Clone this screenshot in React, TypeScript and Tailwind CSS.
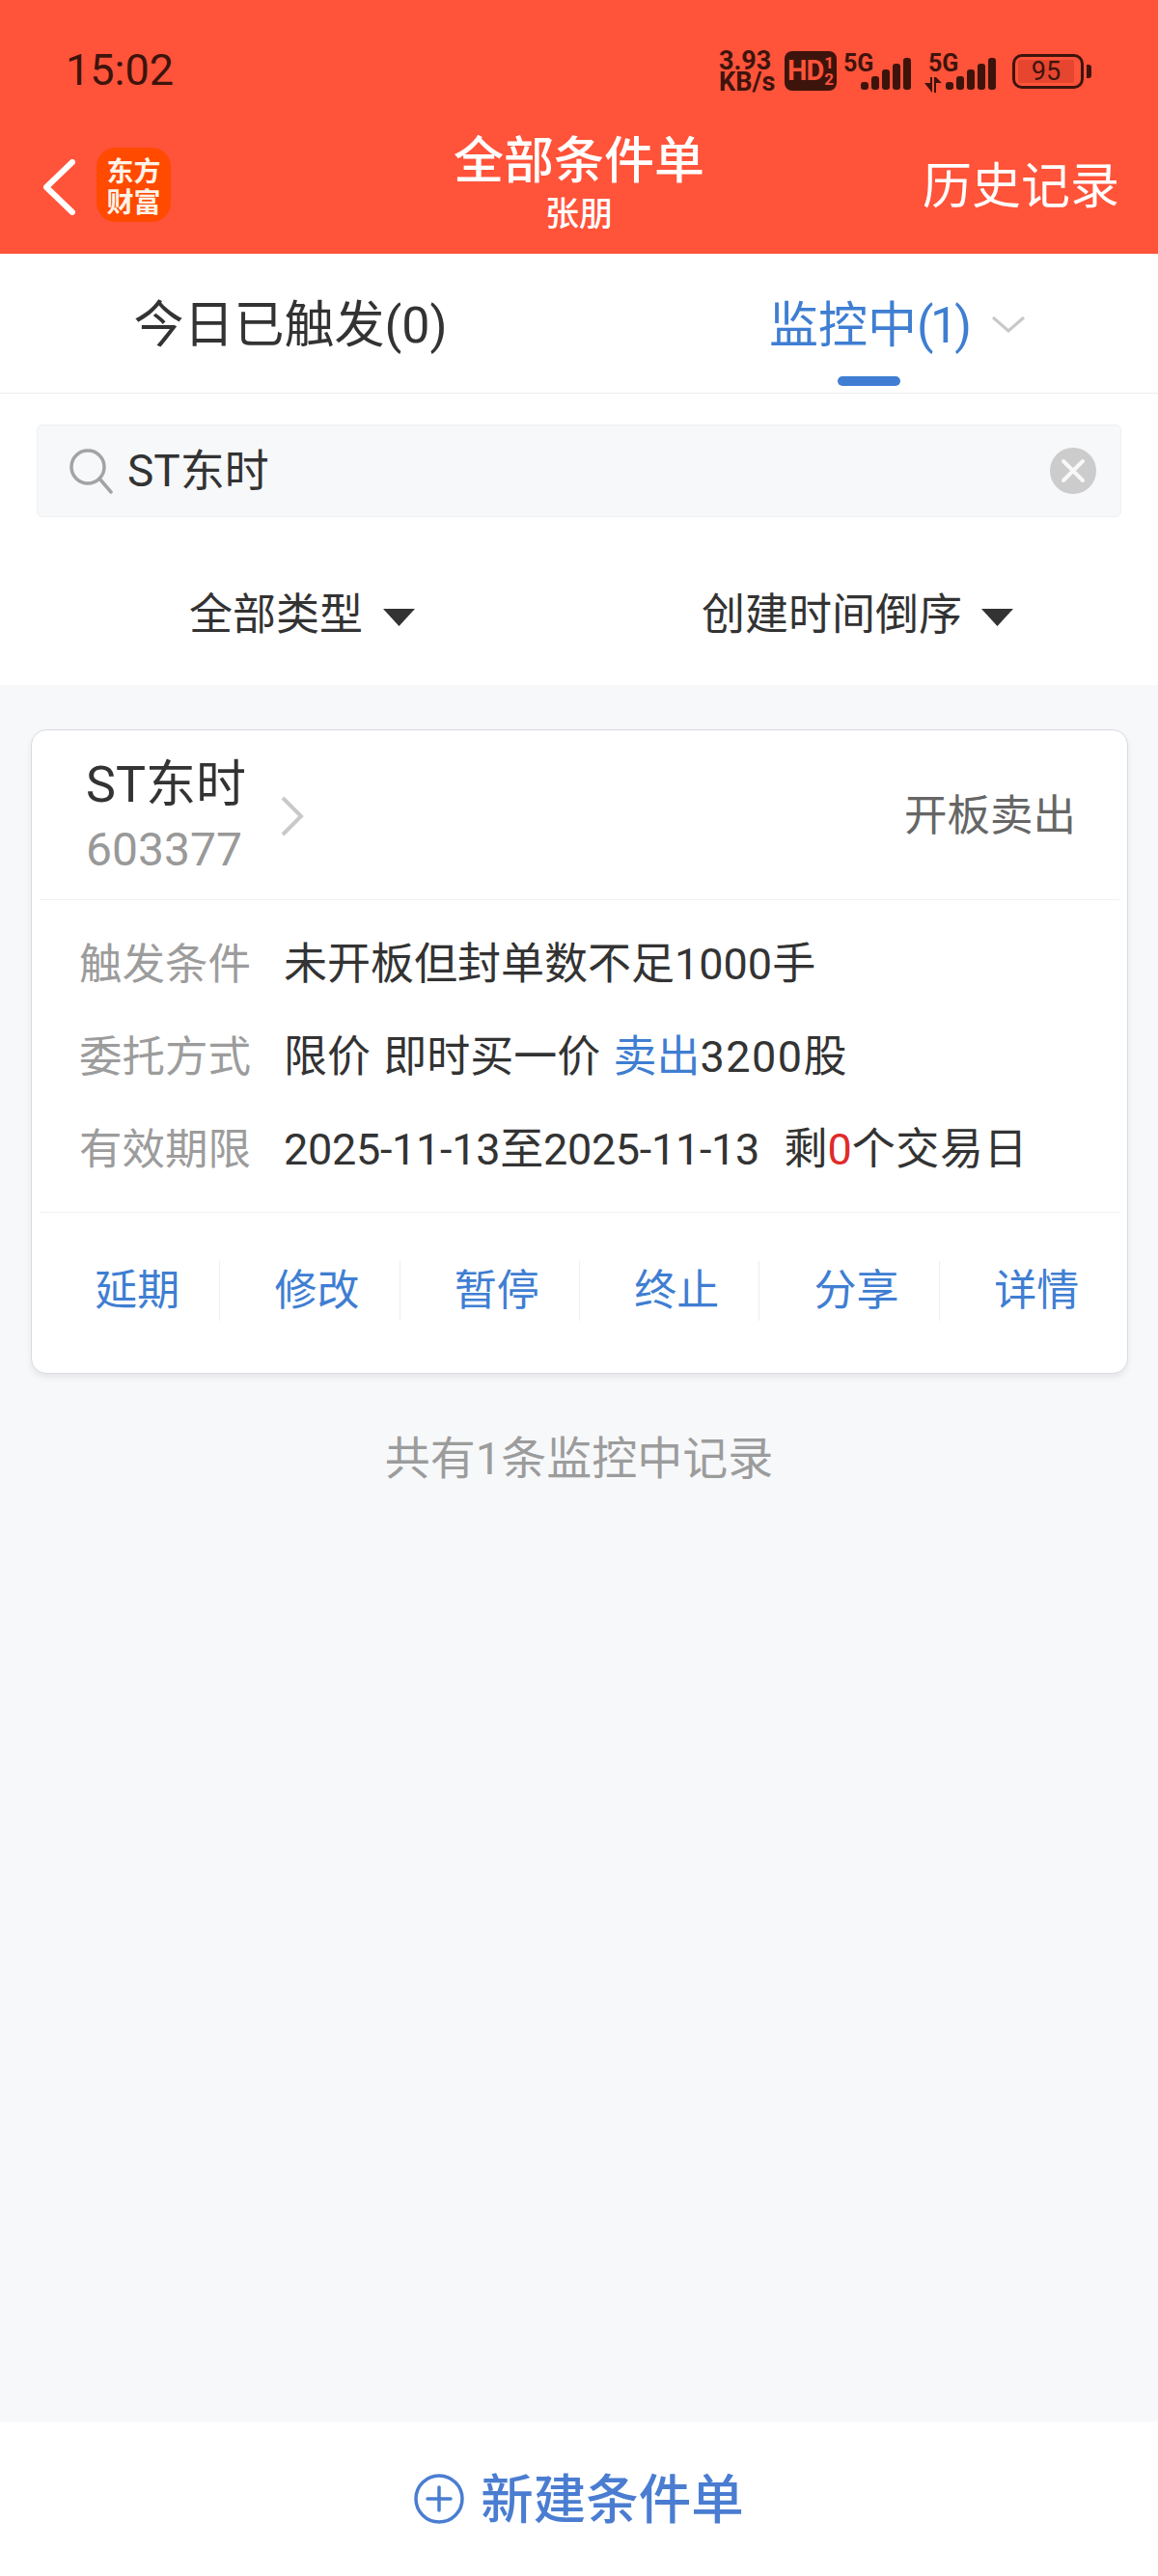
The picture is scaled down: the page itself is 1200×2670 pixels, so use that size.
import React from "react";

const ff = "font-['Roboto','Noto_Sans_CJK_SC',sans-serif]";

function Signal({ arrows }: { arrows?: boolean }) {
  const heights = [8, 14, 21, 27, 33];
  return (
    <div className="relative w-[76px] h-[40px]">
      <span className={`absolute left-[4px] top-[-3px] text-[25px] leading-none font-bold text-[#3d140c] ${ff}`}>5G</span>
      <svg width="76" height="40" viewBox="0 0 76 40" className="absolute left-0 top-0">
        {arrows && (
          <g fill="#3d140c">
            <path d="M0 30 h6 v-6 h2 v16 z" />
            <path d="M10 24 h2 l6 6 h-6 v10 h-2 z" />
          </g>
        )}
        {heights.map((h, i) => (
          <rect key={i} x={22 + i * 11} y={37 - h} width="8" height={h} rx="3" fill="#3d140c" />
        ))}
      </svg>
    </div>
  );
}

function StatusBar() {
  return (
    <div className="h-[130px] flex items-start justify-between pl-[68px] pr-[69px] pt-[50px]">
      <span className={`text-[45px] leading-[45px] font-normal text-[#3d140c] ${ff}`}>15:02</span>
      <div className="flex items-start">
        <div className={`w-[60px] font-bold text-[#3d140c] text-[27px] leading-[22px] mt-[2px] ${ff}`}>
          <div>3.93</div>
          <div>KB/s</div>
        </div>
        <div className={`ml-[8px] w-[54px] h-[41px] mt-[3px] rounded-[8px] bg-[#3d140c] flex items-center justify-center text-[#ff533a] font-bold ${ff}`}>
          <span className="text-[29px] leading-none tracking-[-1px]">HD</span>
          <span className="flex flex-col text-[17px] leading-[17px] ml-[1px]">
            <span>1</span>
            <span>2</span>
          </span>
        </div>
        <div className="ml-[3px] mt-[6px]">
          <Signal />
        </div>
        <div className="ml-[12px] mt-[6px]">
          <Signal arrows />
        </div>
        <div className="ml-[15px] mt-[6px] flex items-center">
          <div className="w-[74px] h-[36px] rounded-[10px] border-[3.5px] border-[#3d140c] flex items-center p-[3px] pr-[7px]">
            <div className={`w-full h-full rounded-[2px] bg-[#e64530] flex items-center justify-center text-[#3d140c] text-[27px] leading-none ${ff}`}>95</div>
          </div>
          <div className="ml-[3px] w-[5px] h-[14px] rounded-r-[3px] bg-[#3d140c]" />
        </div>
      </div>
    </div>
  );
}

function TitleBar() {
  return (
    <div className="h-[133px] grid grid-cols-[1fr_auto_1fr] items-start">
      <div className="flex items-start pl-[44px] pt-[23px]">
        <svg width="34" height="58" viewBox="0 0 34 58" className="mt-[12px]">
          <path d="M31 3 L4 29 L31 55" fill="none" stroke="#ffffff" strokeWidth="6" strokeLinecap="round" strokeLinejoin="round" />
        </svg>
        <div className="ml-[22px] w-[77px] h-[77px] rounded-[20px] bg-[#ff4a00] flex flex-col items-center justify-center text-[#fff3e8] text-[28px] leading-[32px] font-bold font-['Noto_Sans_CJK_SC',sans-serif]">
          <span>东方</span>
          <span>财富</span>
        </div>
      </div>
      <div className={`flex flex-col items-center text-white ${ff}`}>
        <span className="text-[52px] leading-[60px] font-medium mt-[8px]">全部条件单</span>
        <span className="text-[35px] leading-[40px] font-medium mt-[5px]">张朋</span>
      </div>
      <div className={`text-right pr-[40px] pt-[34px] text-white text-[51px] leading-[60px] ${ff}`}>历史记录</div>
    </div>
  );
}

function Tabs() {
  return (
    <div className={`h-[145px] bg-white border-b border-[#eeeeee] flex ${ff}`}>
      <div className="w-[602px] pt-[45px] text-center text-[#333333] text-[52px] leading-[60px]">
        今日已触发(0)
      </div>
      <div className="flex-1 relative pt-[45px] pl-[195px] flex items-start">
        <span className="text-[#3f7ed2] text-[51px] leading-[60px]">
          监控中<span className="tracking-[-3.5px]">(1)</span>
        </span>
        <svg width="36" height="20" viewBox="0 0 36 20" className="ml-[24px] mt-[18px]">
          <path d="M2 3 L18 17 L34 3" fill="none" stroke="#c8c8c8" strokeWidth="3" />
        </svg>
        <div className="absolute left-[266px] top-[127px] w-[65px] h-[10px] rounded-[5px] bg-[#3f7ed2]" />
      </div>
    </div>
  );
}

function Search() {
  return (
    <div className={`bg-white pt-[32px] px-[38px] ${ff}`}>
      <div className="h-[96px] rounded-[6px] bg-[#f7f8fa] border border-[#f0f0f2] flex items-center pl-[32px] pr-[25px]">
        <svg width="46" height="48" viewBox="0 0 46 48" fill="none" stroke="#a3a3a3" strokeWidth="3.5">
          <circle cx="20" cy="20" r="17" />
          <path d="M32 32 L44 46" strokeLinecap="round" />
        </svg>
        <span className="ml-[15px] flex-1 text-[#333333] text-[46px] leading-[56px]">ST东时</span>
        <svg width="48" height="48" viewBox="0 0 48 48">
          <circle cx="24" cy="24" r="24" fill="#cccccc" />
          <path d="M14 14 L34 34 M34 14 L14 34" stroke="#f7f8fa" strokeWidth="4" strokeLinecap="round" />
        </svg>
      </div>
    </div>
  );
}

function Caret() {
  return (
    <svg width="33" height="18" viewBox="0 0 33 18" className="mt-[4px]">
      <path d="M0 0 H33 L16.5 18 Z" fill="#333333" />
    </svg>
  );
}

function Filters() {
  return (
    <div className={`bg-white h-[174px] pt-[30px] flex items-center text-[#333333] text-[45px] leading-[54px] ${ff}`}>
      <div className="w-[196px]" />
      <div className="w-[531px] flex items-center gap-[21px]">
        <span>全部类型</span>
        <Caret />
      </div>
      <div className="flex items-center gap-[20px]">
        <span>创建时间倒序</span>
        <Caret />
      </div>
    </div>
  );
}

function Row({ label, children }: { label: string; children: React.ReactNode }) {
  return (
    <div className="h-[96px] flex items-center">
      <span className="w-[212px] text-[#9c9c9c] text-[44.5px] leading-[54px]">{label}</span>
      <span className="text-[#333333] text-[45px] leading-[54px] whitespace-pre">{children}</span>
    </div>
  );
}

function Card() {
  const actions = ["延期", "修改", "暂停", "终止", "分享", "详情"];
  return (
    <div className={`ml-[32px] mr-[31px] mt-[46px] h-[668px] bg-white rounded-[16px] border border-[#d9dbe0] shadow-[0_4px_6px_rgba(0,0,0,0.07)] px-[8px] ${ff}`}>
      <div className="h-[176px] border-b border-[#f0f0f0] flex items-start">
        <div className="ml-[48px] mt-[27px] flex flex-col">
          <span className="text-[#333333] text-[52px] leading-[60px]">ST东时</span>
          <span className="text-[#999999] text-[48px] leading-[60px] mt-[7px]">603377</span>
        </div>
        <svg width="26" height="44" viewBox="0 0 26 44" className="ml-[35px] mt-[67px]">
          <path d="M3 3 L22 22 L3 41" fill="none" stroke="#c9c9c9" strokeWidth="4" />
        </svg>
        <span className="ml-auto mr-[45px] mt-[62px] text-[#666666] text-[44.5px] leading-[54px]">开板卖出</span>
      </div>
      <div className="h-[324px] border-b border-[#f0f0f0] pl-[41px] pt-[19px]">
        <Row label="触发条件">未开板但封单数不足1000手</Row>
        <Row label="委托方式">
          限价<span className="tracking-[2px]"> </span>即时买一价<span className="tracking-[2px]"> </span>
          <span className="text-[#3f7ed2]">卖出</span>
          <span className="tracking-[1.5px]">3200</span>股
        </Row>
        <Row label="有效期限">
          <span className="tracking-[-0.3px]">2025-11-13至2025-11-13</span>
          <span className="tracking-[1.5px]">  </span>剩<span className="text-[#e02a2a]">0</span>
          <span className="tracking-[0.6px]">个交易日</span>
        </Row>
      </div>
      <div className="flex pl-[1px] pt-[50px]">
        {actions.map((a, i) => (
          <div
            key={a}
            className={`w-[186.6px] h-[62px] pl-[15px] flex items-center justify-center text-[#3f7ed2] text-[44px] leading-[54px] ${i < 5 ? "border-r border-[#eeeeee]" : ""}`}
          >
            {a}
          </div>
        ))}
      </div>
    </div>
  );
}

function Footer() {
  return (
    <div className={`h-[160px] bg-white flex items-center justify-center text-[#4a7dd1] ${ff}`}>
      <svg width="52" height="52" viewBox="0 0 52 52" fill="none" stroke="#4a7dd1" strokeWidth="3.5" className="mr-[17px]">
        <circle cx="26" cy="26" r="24" />
        <path d="M14 26 H38 M26 14 V38" strokeLinecap="round" />
      </svg>
      <span className="text-[54.5px] leading-[64px] font-medium pt-[2px]">新建条件单</span>
    </div>
  );
}

export default function App() {
  return (
    <div className="w-[1200px] h-[2670px] flex flex-col bg-[#f7f8fa] overflow-hidden">
      <div className="bg-[#ff533a]">
        <StatusBar />
        <TitleBar />
      </div>
      <Tabs />
      <Search />
      <Filters />
      <div className="flex-1">
        <Card />
        <div className={`mt-[60px] text-center text-[#9c9c9c] text-[47px] leading-[56px] ${ff}`}>共有1条监控中记录</div>
      </div>
      <Footer />
    </div>
  );
}
